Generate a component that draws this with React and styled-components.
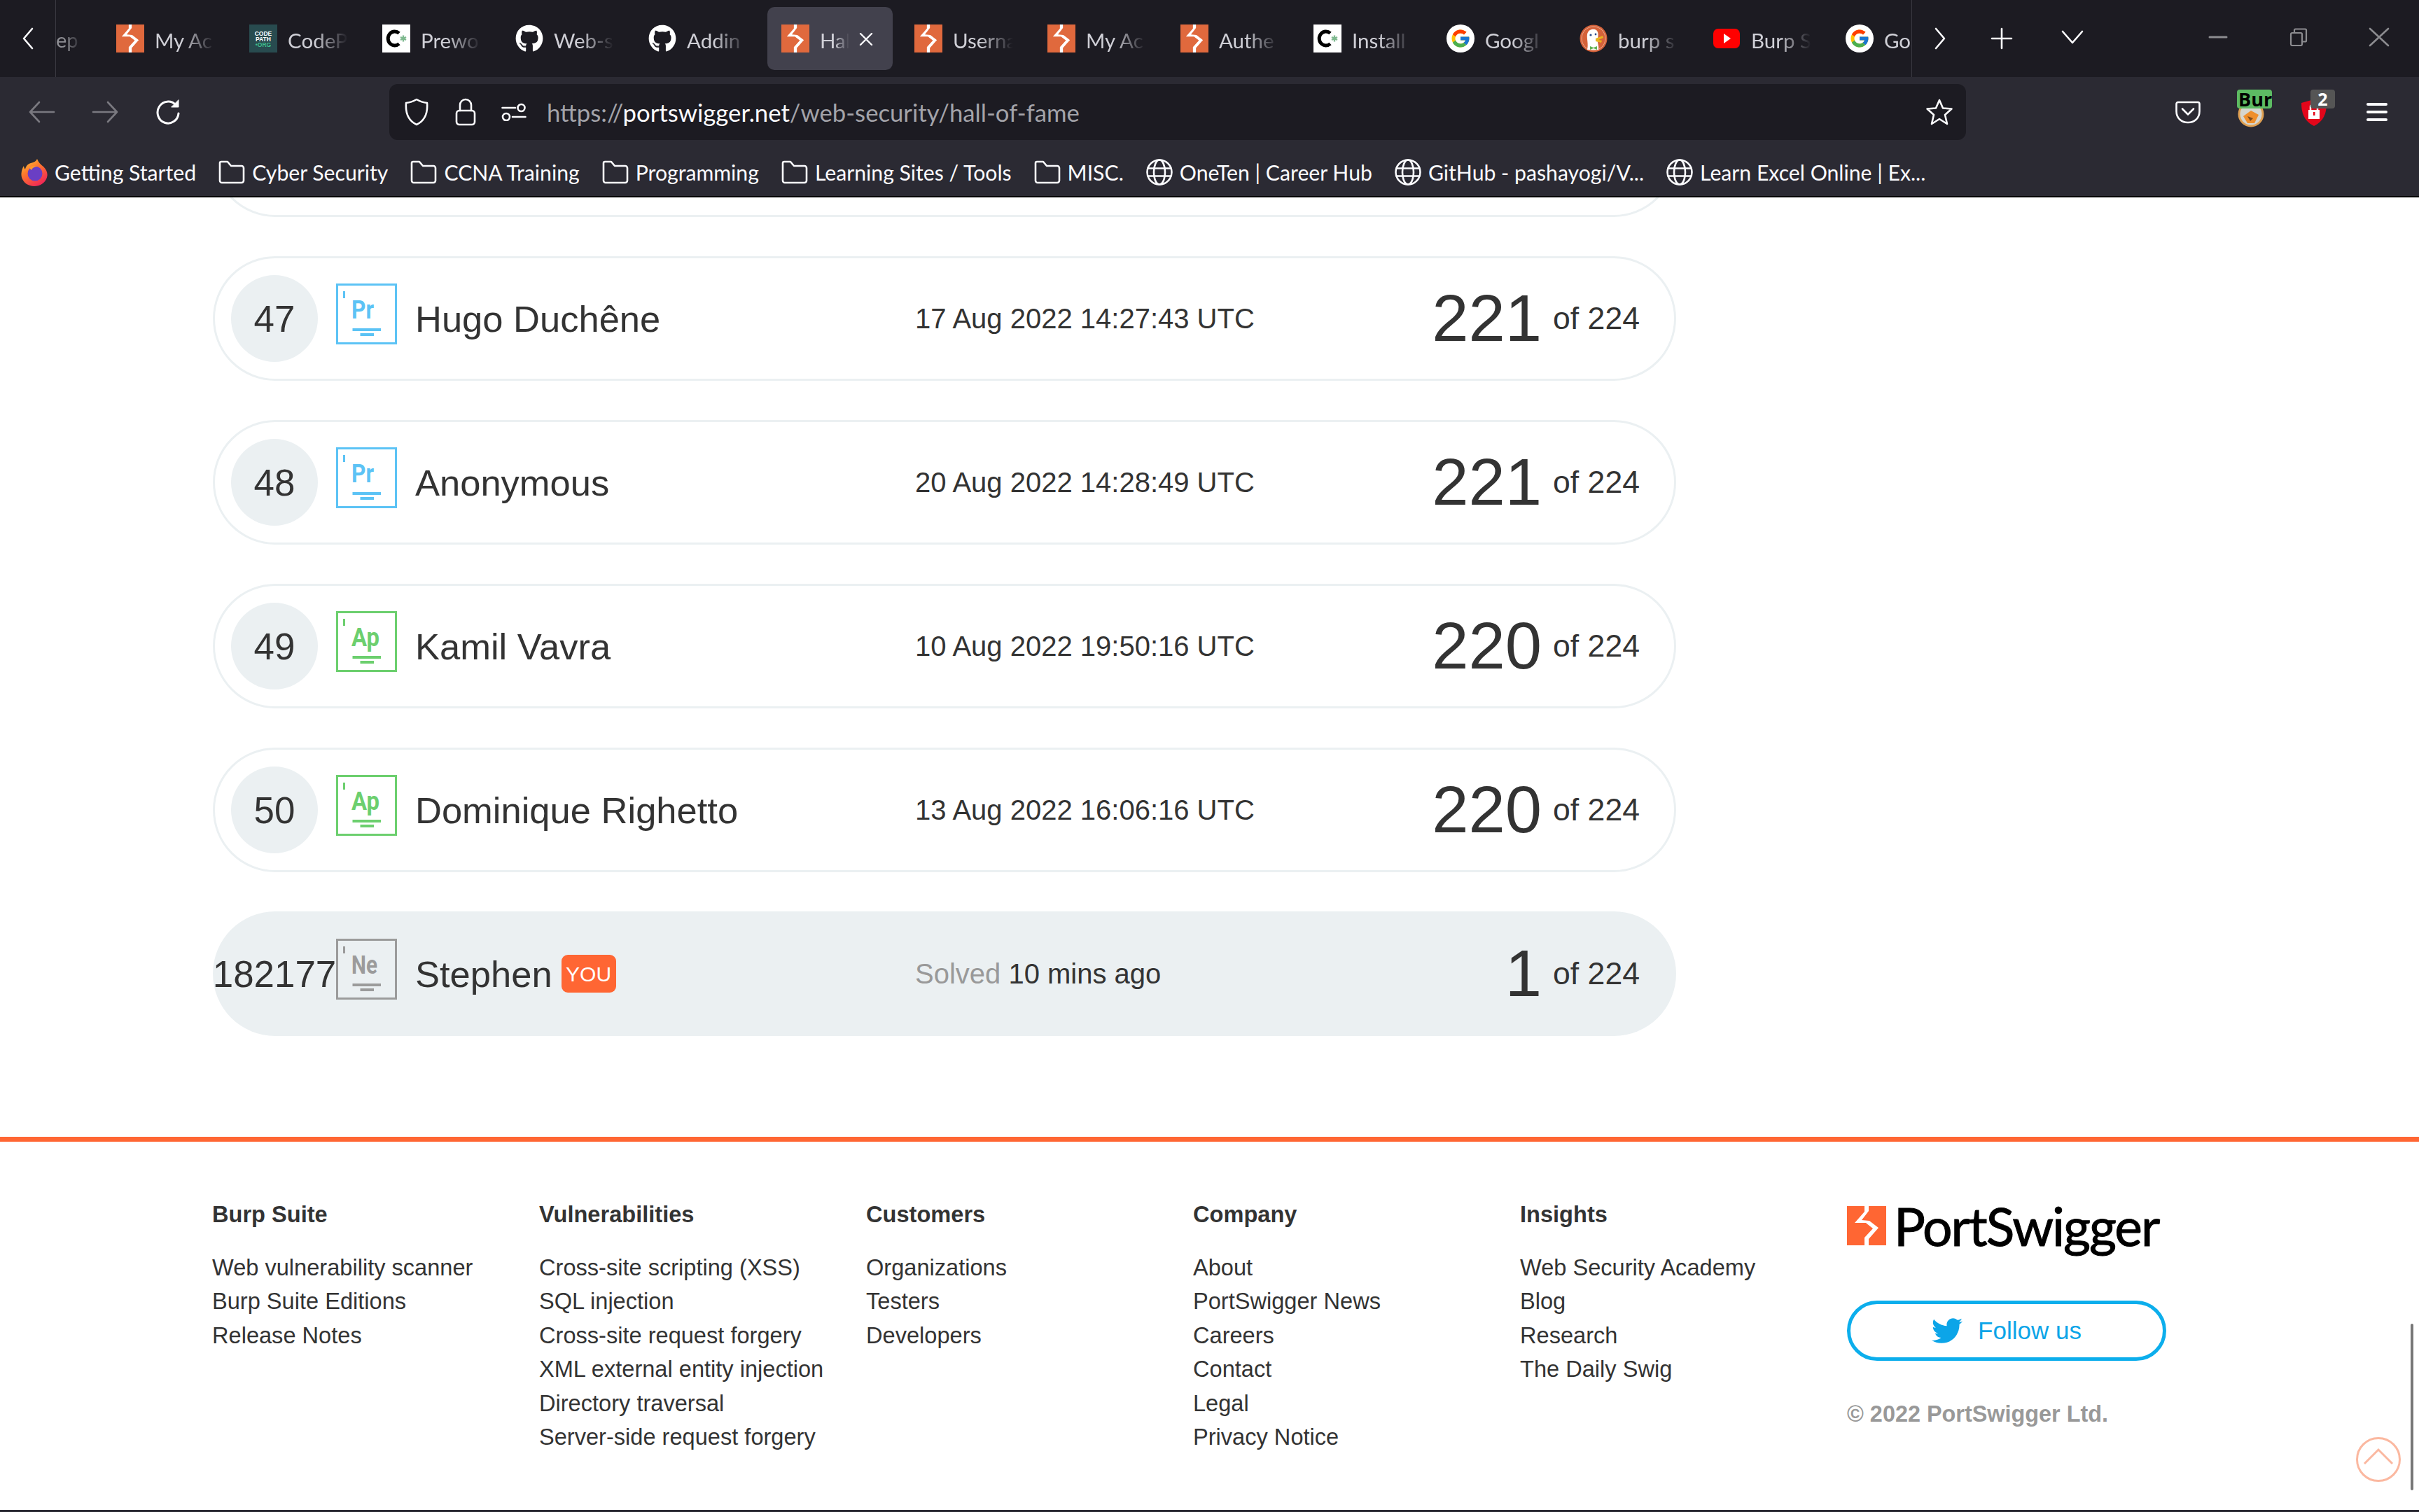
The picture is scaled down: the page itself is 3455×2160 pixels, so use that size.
import React from 'react';
import styled, { createGlobalStyle } from 'styled-components';
import { FaGithub, FaTwitter } from 'react-icons/fa';
import { FcGoogle } from 'react-icons/fc';

const Global = createGlobalStyle`
  html, body { margin: 0; padding: 0; background: #fff; }
  * { box-sizing: border-box; }
  body { font-family: "Liberation Sans", Arial, sans-serif; color: #333; }
`;

const Screen = styled.div`
  position: relative; width: 3455px; height: 2160px; overflow: hidden;
  display: flex; flex-direction: column; background: #fff;
`;
const TabBar = styled.div`
  display: flex; align-items: stretch; height: 110px; background: #1c1b22; flex: none;
`;
const CtlBtn = styled.div`
  width: ${p => p.$w}px; flex: none; display: flex; align-items: center; justify-content: center;
  color: ${p => p.$color || '#fbfbfe'}; padding-bottom: ${p => p.$pb ?? 0}px;
`;
const TabStrip = styled.div`
  display: flex; width: 2652px; flex: none; overflow: hidden; align-items: stretch;
  border-left: 1px solid #3b3a42; border-right: 1px solid #3b3a42;
`;
const ClippedTab = styled.div`
  width: 60.5px; flex: none; display: flex; align-items: center; font: 400 29px Lato, sans-serif;
  color: #8f8f95; padding-top: 3px;
  mask-image: linear-gradient(to right, #000 20%, transparent 60%);
`;
const Tab = styled.div`
  flex: none; width: 179px; margin: 10px 5.5px; padding-left: 20px; display: flex; align-items: center; gap: 15px;
  border-radius: 10px; background: ${p => (p.$active ? '#42414d' : 'transparent')}; position: relative;
`;
const TabTitle = styled.span`
  font: 400 29.5px Lato, sans-serif; color: #cfcfd6; white-space: nowrap; overflow: hidden;
  width: ${p => (p.$active ? 42 : 86)}px; padding-top: 4px;
  mask-image: linear-gradient(to right, #000 ${p => (p.$active ? 50 : 45)}%, transparent 100%);
`;
const TabClose = styled.span`
  display: flex; margin-left: -1px; margin-top: 1px; color: #fbfbfe;
`;
const Fav = styled.span`
  flex: none; width: 40px; height: 40px; display: flex; align-items: center; justify-content: center;
`;
const GoogleDisc = styled.span`
  width: 40px; height: 40px; border-radius: 50%; background: #fff; display: flex; align-items: center; justify-content: center;
`;
const Spacer = styled.div`flex: 1;`;

const Toolbar = styled.div`
  display: flex; align-items: flex-start; height: 115px; padding: 10px 15px 0; background: #2b2a33; flex: none;
`;
const NavBtn = styled.div`
  position: relative; width: 90px; height: 80px; flex: none; display: flex; align-items: center; justify-content: center;
  color: ${p => (p.$dim ? '#7a7980' : '#fbfbfe')};
`;
const UrlBar = styled.div`
  margin-left: 271px; width: 2252px; height: 80px; flex: none; border-radius: 12px; background: #1c1b22;
  display: flex; align-items: center; padding: 0 18px 0 21px; color: #fbfbfe;
`;
const UrlIcon = styled.span`display: flex; margin-left: ${p => p.$ml || 0}px;`;
const UrlText = styled.div`
  margin-left: 29px; font: 400 34.7px Lato, sans-serif; color: #a3a3a9; white-space: nowrap; padding-top: 1px;
  b { font-weight: 400; color: #fbfbfe; }
`;
const StarWrap = styled.span`display: flex; margin-left: auto;`;
const ToolRight = styled.div`display: flex; margin-left: auto;`;
const Badge = styled.span`
  position: absolute; top: 8px; left: ${p => p.$left}px; width: ${p => p.$w}px; height: 27px; border-radius: 4px;
  background: ${p => p.$bg}; color: ${p => p.$fg}; font: 700 ${p => p.$fs}px/27px "Open Sans", sans-serif;
  overflow: hidden; text-align: ${p => p.$align}; padding-left: ${p => p.$pl || 0}px;
`;
const BurgerLines = styled.span`
  display: flex; flex-direction: column; gap: 7px; width: 30px;
  i { display: block; height: 4px; background: #fbfbfe; border-radius: 2px; }
`;
const ExtIcon = styled.span`display: flex; margin-top: ${p => p.$mt || 0}px; margin-left: ${p => p.$ml || 0}px;`;

const Bookmarks = styled.div`
  display: flex; align-items: center; gap: 32px; height: 57px; padding: 0 0 14px 30px; background: #2b2a33;
  border-bottom: 2px solid #000; flex: none;
`;
const Mark = styled.div`
  display: flex; align-items: center; gap: 10px; font: 400 30.2px Lato, sans-serif; color: #fbfbfe; white-space: nowrap;
`;

const Main = styled.main`flex: 1; position: relative; display: flex; flex-direction: column; min-height: 0;`;
const Board = styled.section`padding-left: 304px;`;
const ScrollClip = styled.div`height: 28px; overflow: hidden; margin-bottom: 56px;`;
const Row = styled.div`
  width: 2090px; height: 178px; border-radius: 89px; padding: 0 49px 0 23px;
  border: 3px solid ${p => (p.$you ? 'transparent' : '#ebf0f2')};
  background: ${p => (p.$you ? '#ebf0f2' : '#fff')};
  display: grid; grid-template-columns: 124px 113px 740px 1fr auto; align-items: center;
  margin-top: ${p => p.$clip ? -150 : 0}px; margin-bottom: 56.1px;
`;
const Rank = styled.div`
  width: 124px; height: 124px; border-radius: 50%; display: flex; align-items: center; justify-content: center;
  background: ${p => (p.$you ? 'transparent' : '#ebf0f2')}; font-size: 52.9px; white-space: nowrap; color: #333;
`;
const Level = styled.svg`display: block; margin: 0 0 13px 26px; width: 87px; height: 87px;`;
const Name = styled.div`
  display: flex; align-items: center; gap: 13px; font-size: 52.5px; margin-left: 26px; white-space: nowrap; color: #333;
`;
const You = styled.span`
  background: #ff6633; color: #fff; font-size: 30px; border-radius: 9px; height: 54px; line-height: 56px; padding: 0 6.5px;
`;
const When = styled.div`font-size: 40px; white-space: nowrap; color: #333; span { color: #999; }`;
const Score = styled.div`display: flex; align-items: center; gap: 16px; justify-self: end; grid-column: 5;`;
const Big = styled.span`font-size: 94px; line-height: 1; color: #333;`;
const Small = styled.span`font-size: 44.6px; line-height: 1; color: #333; white-space: nowrap;`;

const Footer = styled.footer`
  margin-top: 87.5px; border-top: 7px solid #ff6633; flex: 1; padding: 80px 0 0 303px;
  display: grid; grid-template-columns: repeat(5, 467px) 470px; align-items: start;
`;
const Col = styled.div`font-size: 32.6px; line-height: 48.47px; color: #333;`;
const ColHead = styled.div`font-weight: 700; margin-bottom: 27.2px;`;
const Item = styled.div`white-space: nowrap;`;
const Brand = styled.div`display: flex; align-items: center; gap: 11px; margin-top: 12px; height: 56px;`;
const BrandText = styled.span`font: 400 75px/56px Lato, sans-serif; color: #000; -webkit-text-stroke: 1px #000; letter-spacing: -2px;`;
const Follow = styled.div`
  margin-top: 79px; width: 456px; height: 86px; border: 5px solid #0caeec; border-radius: 43px; display: flex;
  align-items: center; justify-content: center; gap: 22px; color: #0ca5e8; font-size: 35px;
`;
const Copy = styled.div`margin-top: 52px; font-weight: 700; font-size: 32.4px; line-height: 48px; color: #999; white-space: nowrap;`;
const BottomEdge = styled.div`height: 3px; background: #2b2a33; flex: none;`;
const ScrollThumb = styled.div`
  position: absolute; right: 8px; bottom: 31px; width: 4px; height: 238px; border-radius: 2px; background: #777;
`;
const ToTop = styled.svg`position: absolute; right: 26px; bottom: 43px; width: 64px; height: 64px;`;

const BOLT = '25,0 31,0 31,7 21,20 32,21 45,31 31,47 31,56 25,56 25,45 37,32 27,24 11,24 25,8';
const BurpIcon = ({ size = 40, color = '#e0693d', w }) => (
  <svg width={w || size} height={size} viewBox="0 0 56 56" preserveAspectRatio="none">
    <rect width="56" height="56" fill={color} />
    <polygon points={BOLT} fill="#fff" />
  </svg>
);
const CodePathIcon = () => (
  <svg width="40" height="40" viewBox="0 0 40 40">
    <rect width="40" height="40" fill="#284b4f" />
    <g fontFamily="Liberation Sans" fontWeight="700" fontSize="8.5" textAnchor="middle">
      <text x="20" y="16" fill="#fff">CODE</text>
      <text x="20" y="24" fill="#fff">PATH</text>
      <text x="20" y="32" fill="#3dbf8f">•ORG</text>
    </g>
  </svg>
);
const CStarIcon = () => (
  <svg width="40" height="40" viewBox="0 0 40 40">
    <rect width="40" height="40" fill="#fff" />
    <path d="M24 12.5A9.5 10 0 1 0 24 27.5" fill="none" stroke="#000" strokeWidth="5" />
    <path d="M30 15.5v9M26 18l8 4M34 18l-8 4" stroke="#7fb98f" strokeWidth="2.4" />
  </svg>
);
const GoogleIcon = () => <GoogleDisc><FcGoogle size={30} /></GoogleDisc>;
const DuckIcon = () => (
  <svg width="40" height="40" viewBox="0 0 40 40">
    <circle cx="20" cy="20" r="19.5" fill="#d5623a" />
    <circle cx="20" cy="20" r="17" fill="none" stroke="#e9a98f" strokeWidth="1" />
    <path d="M11 36C13 28 10 20 11 14 12 7 20 5 24 8 27 10 27 16 26 20 25 26 28 30 27 36Z" fill="#fff" />
    <path d="M23 20l10-4 1 3-7 3 5 1-1 3-8-2Z" fill="#e9b41f" />
    <path d="M15 31l5 2 5-2v5l-5-2-5 2Z" fill="#63b355" />
    <circle cx="16" cy="15" r="1.6" fill="#2d4f8e" />
    <circle cx="23" cy="14" r="1.4" fill="#2d4f8e" />
  </svg>
);
const YouTubeIcon = () => (
  <svg width="40" height="40" viewBox="0 0 40 40">
    <rect x="1" y="6" width="38" height="28" rx="7" fill="#f00" />
    <path d="M16 13l10 7-10 7Z" fill="#fff" />
  </svg>
);
const Favicon = ({ kind }) => {
  const map = {
    burp: <BurpIcon />, code: <CodePathIcon />, c: <CStarIcon />, gh: <FaGithub size={40} color="#fff" />,
    g: <GoogleIcon />, duck: <DuckIcon />, yt: <YouTubeIcon />,
  };
  return <Fav>{map[kind]}</Fav>;
};
const Stroke = ({ w, h, sw = 2.6, children }) => (
  <svg width={w} height={h} viewBox={`0 0 ${w} ${h}`} fill="none" stroke="currentColor" strokeWidth={sw} strokeLinecap="round" strokeLinejoin="round">{children}</svg>
);
const FolderIcon = () => (
  <Stroke w={38} h={34}><path d="M4 2H13L18 8H33a3 3 0 0 1 3 3V29a3 3 0 0 1-3 3H5a3 3 0 0 1-3-3V4a2 2 0 0 1 2-2Z" /></Stroke>
);
const GlobeIcon = () => (
  <Stroke w={38} h={38}>
    <circle cx="19" cy="19" r="17.5" />
    <ellipse cx="19" cy="19" rx="8" ry="17.5" />
    <path d="M2.5 13.5H35.5M2.5 24.5H35.5" />
  </Stroke>
);
const FirefoxIcon = () => (
  <svg width="38" height="40" viewBox="0 0 38 40">
    <defs>
      <linearGradient id="ffg" x1="0" y1="0" x2="0.6" y2="1">
        <stop offset="0" stopColor="#ffd23b" />
        <stop offset="0.45" stopColor="#ff7a2b" />
        <stop offset="1" stopColor="#f02a55" />
      </linearGradient>
    </defs>
    <path d="M23 1C25 6 28 9 32 12 36 16 38 20 37.5 25 36.5 34 28 40 19 40 8 40 0 32 .5 22 .8 18 2 14 4 11 4 13 5 15 6 16 7 11 10 8 14 7 19 6 22 4 23 1Z" fill="url(#ffg)" />
    <circle cx="20" cy="22" r="10.5" fill="#6a3fc4" />
    <path d="M12 14c3-3 8-4 12-2-5 0-8 2-9 5Z" fill="#ff9a2e" />
  </svg>
);

const TABS = [
  ['burp', 'My Ac'], ['code', 'CodeP'], ['c', 'Prewo'], ['gh', 'Web-s'], ['gh', 'Addin'], ['burp', 'Hal', true],
  ['burp', 'Userna'], ['burp', 'My Ac'], ['burp', 'Authe'], ['c', 'Install'], ['g', 'Googl'], ['duck', 'burp s'],
  ['yt', 'Burp S'], ['g', 'Goo'],
];
const MARKS = [
  ['fox', 'Getting Started'], ['folder', 'Cyber Security'], ['folder', 'CCNA Training'], ['folder', 'Programming'],
  ['folder', 'Learning Sites / Tools'], ['folder', 'MISC.'], ['globe', 'OneTen | Career Hub'],
  ['globe', 'GitHub - pashayogi/V...'], ['globe', 'Learn Excel Online | Ex...'],
];
const ROWS = [
  [47, 'Pr', 'Hugo Duchêne', '17 Aug 2022 14:27:43 UTC', 221],
  [48, 'Pr', 'Anonymous', '20 Aug 2022 14:28:49 UTC', 221],
  [49, 'Ap', 'Kamil Vavra', '10 Aug 2022 19:50:16 UTC', 220],
  [50, 'Ap', 'Dominique Righetto', '13 Aug 2022 16:06:16 UTC', 220],
];
const LEVEL_COLOR = { Pr: '#5cc3f5', Ap: '#6ccf6e', Ne: '#9b9b9b' };
const LEVEL_WIDTH = { Pr: 32, Ap: 40, Ne: 37 };
const FOOT = [
  ['Burp Suite', ['Web vulnerability scanner', 'Burp Suite Editions', 'Release Notes']],
  ['Vulnerabilities', ['Cross-site scripting (XSS)', 'SQL injection', 'Cross-site request forgery', 'XML external entity injection', 'Directory traversal', 'Server-side request forgery']],
  ['Customers', ['Organizations', 'Testers', 'Developers']],
  ['Company', ['About', 'PortSwigger News', 'Careers', 'Contact', 'Legal', 'Privacy Notice']],
  ['Insights', ['Web Security Academy', 'Blog', 'Research', 'The Daily Swig']],
];

const LevelIcon = ({ code }) => {
  const c = LEVEL_COLOR[code];
  return (
    <Level viewBox="0 0 87 87">
      <rect x="1.5" y="1.5" width="84" height="84" fill="none" stroke={c} strokeWidth="3" />
      <rect x="10" y="11" width="3" height="10" fill={c} />
      <text x="22" y="50" fontFamily="Roboto" fontWeight="700" fontSize="36" fill={c} textLength={LEVEL_WIDTH[code]} lengthAdjust="spacingAndGlyphs">{code}</text>
      <rect x="23.5" y="64" width="40.5" height="4" fill={c} />
      <rect x="34.5" y="71" width="19.5" height="4" fill={c} />
    </Level>
  );
};

export default function App() {
  return (
    <Screen>
      <Global />
      <TabBar>
        <CtlBtn $w={79}>
          <Stroke w={18} h={32} sw={2.6}><path d="M15 2L3 16L15 30" /></Stroke>
        </CtlBtn>
        <TabStrip>
          <ClippedTab>ep</ClippedTab>
          {TABS.map(([k, t, a], i) => (
            <Tab key={i} $active={a}>
              <Favicon kind={k} />
              <TabTitle $active={a}>{t}</TabTitle>
              {a && <TabClose><Stroke w={20} h={18} sw={2.4}><path d="M2 1L18 17M18 1L2 17" /></Stroke></TabClose>}
            </Tab>
          ))}
        </TabStrip>
        <CtlBtn $w={80}><Stroke w={18} h={32}><path d="M3 2L15 16L3 30" /></Stroke></CtlBtn>
        <CtlBtn $w={96}><Stroke w={32} h={32}><path d="M16 2V30M2 16H30" /></Stroke></CtlBtn>
        <CtlBtn $w={106} $pb={4}><Stroke w={32} h={20}><path d="M2 2L16 18L30 2" /></Stroke></CtlBtn>
        <Spacer />
        <CtlBtn $w={115} $color="#8c8c90" $pb={4}><Stroke w={28} h={4} sw={3}><path d="M2 2H26" /></Stroke></CtlBtn>
        <CtlBtn $w={115} $color="#8c8c90" $pb={4}>
          <Stroke w={26} h={26} sw={2.2}><rect x="2" y="7" width="16" height="18" rx="2" /><path d="M7 7V3a1.5 1.5 0 0 1 1.5-1.5H22.5A1.5 1.5 0 0 1 24 3V18a1.5 1.5 0 0 1-1.5 1.5H18" /></Stroke>
        </CtlBtn>
        <CtlBtn $w={115} $color="#8c8c90" $pb={4}><Stroke w={30} h={28} sw={2.6}><path d="M2 2L28 26M28 2L2 26" /></Stroke></CtlBtn>
      </TabBar>

      <Toolbar>
        <NavBtn $dim><Stroke w={38} h={32}><path d="M15 2L2 16L15 30M2 16H36" /></Stroke></NavBtn>
        <NavBtn $dim><Stroke w={38} h={32}><path d="M23 2L36 16L23 30M36 16H2" /></Stroke></NavBtn>
        <NavBtn>
          <svg width="38" height="38" viewBox="0 0 38 38" fill="none" stroke="currentColor" strokeWidth="3" strokeLinecap="round">
            <path d="M30 9A15 15.5 0 1 0 34 21" />
            <path d="M34 2V12H24Z" fill="currentColor" strokeWidth="1" strokeLinejoin="round" />
          </svg>
        </NavBtn>
        <UrlBar>
          <UrlIcon><Stroke w={36} h={40}><path d="M18 2C13 5 8 6.500 3 7 2 20 5 32 18 38 31 32 34 20 33 7 28 6.500 23 5 18 2Z" /></Stroke></UrlIcon>
          <UrlIcon $ml={37}><Stroke w={30} h={40}><rect x="2" y="18" width="26" height="20" rx="4" /><path d="M7 18V10a8 8 0 0 1 16 0V18" /></Stroke></UrlIcon>
          <UrlIcon $ml={36}><Stroke w={36} h={26}><path d="M1.500 7H20M16 20H34.500" /><circle cx="28.500" cy="7" r="5" /><circle cx="7" cy="20" r="5" /></Stroke></UrlIcon>
          <UrlText>https://<b>portswigger.net</b>/web-security/hall-of-fame</UrlText>
          <StarWrap><Stroke w={40} h={40}><path d="M20 3L25 14.500 37.500 15.500 28 24 31 37 20 30 9 37 12 24 2.500 15.500 15 14.500Z" /></Stroke></StarWrap>
        </UrlBar>
        <ToolRight>
          <NavBtn><Stroke w={36} h={33}><path d="M4 2H32a2.500 2.500 0 0 1 2.500 2.500V15C34.500 25 27 31 18 31S1.500 25 1.500 15V4.500A2.500 2.500 0 0 1 4 2ZM10 11.500L18 19.500 26 11.500" /></Stroke></NavBtn>
          <NavBtn>
            <ExtIcon $mt={6}>
              <svg width="38" height="38" viewBox="0 0 38 38">
                <circle cx="19" cy="19" r="18.500" fill="#e0a052" />
                <circle cx="19" cy="19" r="15.500" fill="#d6d6d0" />
                <path d="M8 22L19 14 30 20 24 32H14Z" fill="#ef8f2c" />
                <path d="M14 22L22 25 18 29Z" fill="#7a4a20" />
              </svg>
            </ExtIcon>
            <Badge $left={25} $w={50} $bg="#5dbb63" $fg="#000" $fs={27} $align="left" $pl={2}>Bur</Badge>
          </NavBtn>
          <NavBtn>
            <ExtIcon $mt={2}>
              <svg width="36" height="38" viewBox="0 0 36 38">
                <path d="M18 0L36 5C36 20 32 31 18 38 4 31 0 20 0 5Z" fill="#e3061a" />
                <rect x="10" y="15" width="16" height="13" fill="#fff" />
                <path d="M13 15V11a5 5 0 0 1 10 0V15" fill="none" stroke="#fff" strokeWidth="2.500" />
                <rect x="17" y="18" width="2.500" height="5" fill="#e3061a" />
              </svg>
            </ExtIcon>
            <Badge $left={40} $w={35} $bg="#555" $fg="#fff" $fs={25} $align="center">2</Badge>
          </NavBtn>
          <NavBtn><BurgerLines><i /><i /><i /></BurgerLines></NavBtn>
        </ToolRight>
      </Toolbar>

      <Bookmarks>
        {MARKS.map(([k, t]) => (
          <Mark key={t}>
            {k === 'fox' ? <FirefoxIcon /> : k === 'folder' ? <FolderIcon /> : <GlobeIcon />}
            {t}
          </Mark>
        ))}
      </Bookmarks>

      <Main>
        <Board>
          <ScrollClip>
            <Row $clip />
          </ScrollClip>
          {ROWS.map(([n, lv, name, date, score]) => (
            <Row key={n}>
              <Rank>{n}</Rank>
              <LevelIcon code={lv} />
              <Name>{name}</Name>
              <When>{date}</When>
              <Score><Big>{score}</Big><Small>of 224</Small></Score>
            </Row>
          ))}
          <Row $you>
            <Rank $you>182177</Rank>
            <LevelIcon code="Ne" />
            <Name>Stephen <You>YOU</You></Name>
            <When><span>Solved</span> 10 mins ago</When>
            <Score><Big>1</Big><Small>of 224</Small></Score>
          </Row>
        </Board>
        <Footer>
          {FOOT.map(([h, items]) => (
            <Col key={h}>
              <ColHead>{h}</ColHead>
              {items.map(i => <Item key={i}>{i}</Item>)}
            </Col>
          ))}
          <div>
            <Brand><BurpIcon size={56} color="#ff6633" /><BrandText>PortSwigger</BrandText></Brand>
            <Follow><FaTwitter size={44} />Follow us</Follow>
            <Copy>© 2022 PortSwigger Ltd.</Copy>
          </div>
        </Footer>
        <BottomEdge />
        <ScrollThumb />
        <ToTop viewBox="0 0 64 64" fill="none" stroke="#fbb8a0" strokeWidth="3">
          <circle cx="32" cy="32" r="30.500" />
          <path d="M12 38L32 18L52 38" />
        </ToTop>
      </Main>
    </Screen>
  );
}
